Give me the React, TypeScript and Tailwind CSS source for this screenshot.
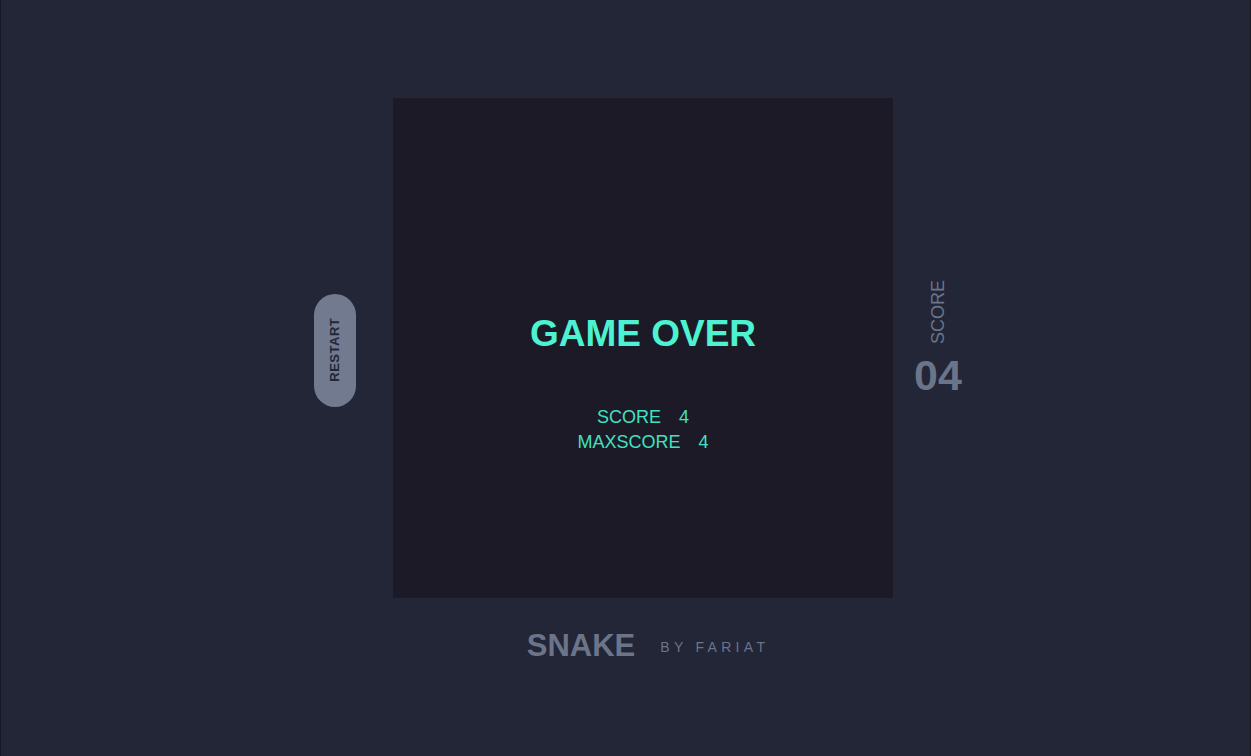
export default function App() {
  return (
    <div
      className="min-h-screen w-full bg-[#222637] border-x border-[#171a24] flex flex-col items-center justify-center"
      style={{ fontFamily: '"Liberation Sans", Arial, sans-serif' }}
    >
      <div className="flex items-center pl-[26px] pt-[4px]">
        {/* restart */}
        <button className="w-[42px] h-[113px] rounded-full bg-[#717a8f] flex items-center justify-center mr-[37px] mb-[60px]">
          <span className="-rotate-90 text-[13px] font-bold tracking-[0.5px] text-[#232838] whitespace-nowrap">
            RESTART
          </span>
        </button>

        <div className="flex flex-col items-center">
          {/* board */}
          <div className="w-[500px] h-[500px] bg-[#1b1a26] flex flex-col items-center pt-[214px]">
            <h1 className="text-[37px] leading-[44px] font-bold text-[#4cf2d1]">GAME OVER</h1>
            <div className="mt-[49px] flex flex-col items-center text-[18px] leading-[25px] text-[#43e0c1]">
              <div>
                SCORE<span className="ml-[18px]">4</span>
              </div>
              <div>
                MAXSCORE<span className="ml-[18px]">4</span>
              </div>
            </div>
          </div>

          {/* title */}
          <div className="mt-[32px] h-[32px] pl-[10px] flex items-center text-[#6b7489]">
            <span className="text-[31px] font-bold leading-[32px]">SNAKE</span>
            <span className="ml-[25px] text-[14px] tracking-[4.3px] mt-[2px]">BY FARIAT</span>
          </div>
        </div>

        {/* score */}
        <div className="w-[50px] ml-[20px] mb-[86px] flex flex-col items-center text-[#6b7489]">
          <div className="h-[64px] w-[20px] flex items-center justify-center">
            <span className="-rotate-90 text-[18px] whitespace-nowrap leading-none">SCORE</span>
          </div>
          <div className="mt-[11px] text-[43px] font-bold leading-[40px]">04</div>
        </div>
      </div>
    </div>
  );
}
